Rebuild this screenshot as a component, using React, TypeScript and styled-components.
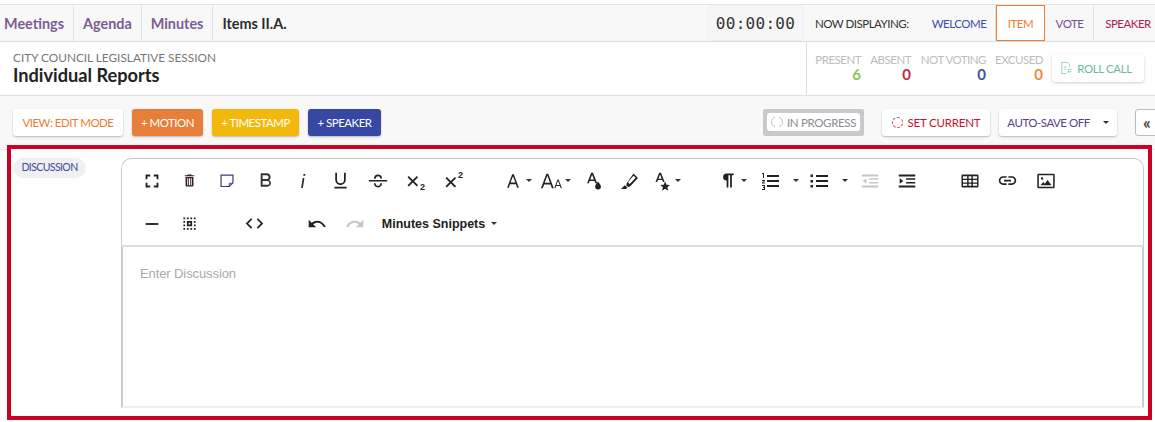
import React from 'react';
import styled, { createGlobalStyle } from 'styled-components';

const GlobalStyle = createGlobalStyle`
  html, body {
    margin: 0;
    padding: 0;
    background: #fff;
    font-family: Lato, "Open Sans", sans-serif;
  }
  * { box-sizing: border-box; }
`;

const Page = styled.div`
  width: 1155px;
  height: 422px;
  overflow: hidden;
  padding-top: 4px;
`;

/* top nav */
const Nav = styled.div`
  display: flex;
  height: 38px;
  background: #f8f8f8;
  border-top: 1px solid #e4e4e4;
  border-bottom: 1px solid #dcdcdc;
  align-items: stretch;
`;

const Crumb = styled.a<{ $current?: boolean }>`
  display: flex;
  align-items: center;
  padding: 0 9px;
  font-size: 14.4px;
  font-weight: 700;
  color: ${p => (p.$current ? '#2c2c2c' : '#7d5c93')};
  border-right: ${p => (p.$current ? 'none' : '1px solid #e2e2e2')};
  &:first-child { padding-left: 4px; }
`;

const NavRight = styled.div`
  margin-left: auto;
  display: flex;
  align-items: stretch;
`;

const Timer = styled.div`
  width: 97px;
  margin-right: 11px;
  display: flex;
  align-items: center;
  justify-content: center;
  font-family: "DejaVu Sans Mono", monospace;
  font-size: 16px;
  letter-spacing: 0.3px;
  color: #333;
  background: #f6f6f6;
  border: 1px solid #f0f0f0;
  border-radius: 5px;
`;

const NowLabel = styled.div`
  width: 107px;
  display: flex;
  align-items: center;
  font-size: 11.5px;
  letter-spacing: -0.5px;
  color: #333;
`;

const DisplayTab = styled.div<{ $color: string; $width: number; $active?: boolean }>`
  width: ${p => p.$width}px;
  flex-shrink: 0;
  display: flex;
  align-items: center;
  justify-content: center;
  font-size: 11.5px;
  letter-spacing: -0.5px;
  color: ${p => p.$color};
  border: 1px solid ${p => (p.$active ? '#ee7d31' : 'transparent')};
  border-right-color: ${p => (p.$active ? '#ee7d31' : '#e2e2e2')};
  background: ${p => (p.$active ? '#fff' : 'transparent')};
  white-space: nowrap;
  &:first-of-type { border-left-color: #e2e2e2; border-radius: 5px 0 0 0; }
  &:last-child { padding-left: 6px; border-right: none; }
`;

/* title row */
const Header = styled.div`
  display: flex;
  height: 54px;
  background: #fff;
  border-bottom: 1px solid #dedede;
`;

const TitleBlock = styled.div`
  padding: 9px 0 0 13px;
  flex: 1;
`;

const Eyebrow = styled.div`
  font-size: 11.8px;
  line-height: 14px;
  color: #777;
`;

const Title = styled.div`
  font-size: 18.2px;
  line-height: 20px;
  font-weight: 700;
  color: #222;
`;

const StatsPanel = styled.div`
  width: 349px;
  border-left: 1px solid #dedede;
  display: flex;
  padding: 11px 11px 0 8px;
`;

const Stat = styled.div<{ $width: number; $color: string }>`
  width: ${p => p.$width}px;
  margin-right: 9px;
  text-align: right;
  font-size: 11.5px;
  letter-spacing: -0.5px;
  line-height: 14px;
  color: #bdbdbd;
  white-space: nowrap;
  b {
    display: block;
    font-size: 15px;
    line-height: 15px;
    letter-spacing: 0;
    color: ${p => p.$color};
  }
`;

const RollCall = styled.div`
  width: 92px;
  height: 28px;
  margin-top: 1px;
  padding-right: 4px;
  display: flex;
  align-items: center;
  justify-content: center;
  gap: 4px;
  font-size: 11.5px;
  letter-spacing: -0.4px;
  color: #6fb7a0;
  background: #fff;
  border-radius: 4px;
  box-shadow: 0 1px 3px rgba(0, 0, 0, 0.2);
`;

/* action bar */
const ActionBar = styled.div`
  display: flex;
  height: 49px;
  padding: 13px 0 0 13px;
  background: #f8f8f8;
`;

const ActionBtn = styled.div<{ $bg: string; $color: string; $width: number; $spacing?: number }>`
  width: ${p => p.$width}px;
  flex-shrink: 0;
  height: 27px;
  margin-right: 9px;
  display: flex;
  align-items: center;
  justify-content: center;
  font-size: 11.5px;
  letter-spacing: ${p => p.$spacing ?? -0.5}px;
  white-space: nowrap;
  color: ${p => p.$color};
  background: ${p => p.$bg};
  border-radius: 3px;
  box-shadow: 0 1px 2px rgba(0, 0, 0, 0.25);
`;

const Spacer = styled.div`
  flex: 1;
`;

const ProgressFrame = styled.div`
  width: 101px;
  height: 27px;
  flex-shrink: 0;
  margin-right: 18px;
  padding: 4px;
  background: #c9c9c9;
  border-radius: 2px;
`;

const ProgressInner = styled.div`
  height: 18px;
  display: flex;
  align-items: center;
  gap: 4px;
  padding-left: 4px;
  font-size: 11.5px;
  letter-spacing: -0.35px;
  white-space: nowrap;
  color: #8a8a95;
  background: #fff;
  border-radius: 3px;
`;

const Caret = styled.span<{ $offset?: number }>`
  display: inline-block;
  width: 0;
  height: 0;
  margin-left: ${p => p.$offset ?? 0}px;
  border-left: 3px solid transparent;
  border-right: 3px solid transparent;
  border-top: 3px solid #333;
`;

const CollapseBtn = styled.div`
  width: 30px;
  height: 27px;
  flex-shrink: 0;
  margin-left: 9px;
  margin-right: -10px;
  padding-left: 7px;
  display: flex;
  align-items: center;
  font-size: 17px;
  font-weight: 700;
  color: #444;
  background: #fff;
  border: 1px solid #bbb;
  border-radius: 3px;
`;

/* red highlighted region */
const Content = styled.div`
  padding: 0 3px 0 7px;
  background: linear-gradient(#f8f8f8 4px, #e6e6e6 4px, #e6e6e6 5px, #fff 5px);
`;

const Highlight = styled.div`
  height: 275px;
  border: 4px solid #cc0023;
  background: #fff;
  display: flex;
  padding: 9px 4px 8px 2px;
`;

const Label = styled.div`
  width: 73px;
  height: 20px;
  display: flex;
  align-items: center;
  justify-content: center;
  font-size: 10.5px;
  letter-spacing: -0.6px;
  padding-bottom: 2px;
  color: #3d4aa5;
  background: #f0f0f2;
  border-radius: 10px;
`;

const Editor = styled.div`
  margin-left: 35px;
  flex: 1;
  display: flex;
  flex-direction: column;
`;

const EditorToolbar = styled.div`
  height: 89px;
  padding: 0 0 0 11px;
  border: 1px solid #ccc;
  border-bottom: 2px solid #ddd;
  border-radius: 10px 10px 0 0;
  background: #fff;
`;

const ToolRow = styled.div`
  display: flex;
  align-items: center;
  height: 43px;
`;

const ToolBtn = styled.div<{ $width?: number; $gap?: number }>`
  width: ${p => p.$width ?? 37.75}px;
  margin-left: ${p => p.$gap ?? 0}px;
  height: 38px;
  flex-shrink: 0;
  display: flex;
  align-items: center;
  justify-content: center;
  gap: 3px;
  svg { display: block; }
`;

const SnippetBtn = styled.div`
  margin-left: 8px;
  display: flex;
  align-items: center;
  gap: 6px;
  font-family: "Liberation Sans", Arial, sans-serif;
  font-size: 12.5px;
  font-weight: 700;
  color: #222;
`;

const EditorBody = styled.div`
  flex: 1;
  padding: 18px 17px;
  border-left: 2px solid #ccc;
  border-right: 2px solid #ccc;
  border-bottom: 2px solid #efefef;
  font-family: "Liberation Sans", Arial, sans-serif;
  font-size: 13px;
  letter-spacing: -0.1px;
  line-height: 17px;
  color: #a9a9a9;
`;

const Icon = ({ d, size = 24, color = '#222' }: { d: string; size?: number; color?: string }) => (
  <svg width={size} height={size} viewBox="0 0 24 24" fill={color}>
    <path d={d} />
  </svg>
);

const paths = {
  fullscreen: 'M7 10H5V5h5v2H7v3zm0 4H5v5h5v-2H7v-3zm12 5h-5v-2h3v-3h2v5zm0-9h-2V7h-3V5h5v5z',
  trash: 'M9 4.5V3.6h6v.9h3.6v1.6H5.4V4.5H9zM6.4 7.2h11.2V19a1.6 1.6 0 0 1-1.6 1.6H8A1.6 1.6 0 0 1 6.4 19V7.2zm2.4 1.6v10h1.4v-10H8.8zm2.5 0v10h1.4v-10h-1.4zm2.5 0v10h1.4v-10h-1.4z',
  bold: 'M15.6 11.8c1-.7 1.7-1.8 1.7-3.3 0-2.3-1.8-4-4-4H7v14h7c2.1 0 3.7-1.7 3.7-3.8 0-1.5-.9-2.8-2.1-2.9zM9 6.5h4.2a2 2 0 0 1 0 4H9v-4zm5 10H9v-4h5a2 2 0 0 1 0 4z',
  italic: 'M12.5 3.5h2.2v2.2h-2.2V3.5zM11.7 8.5h2L11.8 20.5h-2L11.7 8.5z',
  underline: 'M12 17c3.3 0 6-2.7 6-6V3h-2v8a4 4 0 0 1-8 0V3H6v8c0 3.3 2.7 6 6 6zm-7 2v2h14v-2H5z',
  strike: 'M2 11h20v1.6H2V11zM7.6 9.5C7.6 6.6 9.4 5 12 5s4.4 1.6 4.4 4.2h-1.9C14.4 7.6 13.4 6.7 12 6.7S9.5 7.6 9.5 9.5H7.6zM7.6 14.5h1.9c0 1.9 1 2.8 2.5 2.8s2.5-.9 2.5-2.8h1.9c0 2.9-1.8 4.5-4.4 4.5s-4.4-1.6-4.4-4.5z',
  cross: 'M5 7.2 6.3 6l4 4 4-4 1.3 1.2-4 4 4 4-1.3 1.3-4-4-4 4L5 15.2l4-4-4-4z',
  textA: 'M11 4h2l6 16h-2l-1.5-4.2h-7L7 20H5l6-16zm-1.9 9.9h5.8L12 6.2 9.1 13.9z',
  pilcrow: 'M10 4h9v2h-2v14h-2V6h-2v14h-2v-8a4 4 0 0 1 0-8z',
  olLines: 'M9 6h12v2H9V6zm0 5h12v2H9v-2zm0 5h12v2H9v-2zM4 4h2v5H5V5H4V4zm0 7h3v1l-2 1.5h2v1H4v-1l2-1.5H4v-1zm0 5h3v5H4v-1h2v-1H5v-1h1v-1H4v-1z',
  ulLines: 'M9 6h12v2H9V6zm0 5h12v2H9v-2zm0 5h12v2H9v-2zM3.5 5.5H6V8H3.5V5.5zm0 5.5H6v2.5H3.5V11zm0 5H6v2.5H3.5V16z',
  outdent: 'M3 5h18v2H3V5zm8 4h10v1.6H11V9zm0 4h10v1.6H11V13zM3 17h18v2H3v-2zm5-8v6l-4-3 4-3z',
  indent: 'M3 5h18v2H3V5zm8 4h10v1.6H11V9zm0 4h10v1.6H11V13zM3 17h18v2H3v-2zm1-8v6l4-3-4-3z',
  table: 'M4 5h16a1.3 1.3 0 0 1 1.3 1.3v11.4A1.3 1.3 0 0 1 20 19H4a1.3 1.3 0 0 1-1.3-1.3V6.3A1.3 1.3 0 0 1 4 5zm.3 1.7v2.8h4.6V6.7H4.3zm6.2 0v2.8h3V6.7h-3zm4.6 0v2.8h4.6V6.7h-4.6zM4.3 11v2.6h4.6V11H4.3zm6.2 0v2.6h3V11h-3zm4.6 0v2.6h4.6V11h-4.6zM4.3 15.1v2.2h4.6v-2.2H4.3zm6.2 0v2.2h3v-2.2h-3zm4.6 0v2.2h4.6v-2.2h-4.6z',
  link: 'M3.9 12c0-1.7 1.4-3.1 3.1-3.1h4V7H7a5 5 0 0 0 0 10h4v-1.9H7c-1.7 0-3.1-1.4-3.1-3.1zM8 13h8v-2H8v2zm9-6h-4v1.9h4c1.7 0 3.1 1.4 3.1 3.1s-1.4 3.1-3.1 3.1h-4V17h4a5 5 0 0 0 0-10z',
  image: 'M4 4h16a1.5 1.5 0 0 1 1.5 1.5v13A1.5 1.5 0 0 1 20 20H4a1.5 1.5 0 0 1-1.5-1.5v-13A1.5 1.5 0 0 1 4 4zm.2 1.7v12.6h15.6V5.7H4.2zM7.7 8a1.3 1.3 0 1 1 0 2.6 1.3 1.3 0 0 1 0-2.6zM6 16.5l3-3.5 1.7 2 3-4.2 4.3 5.7H6z',
  dash: 'M5 11h14v2H5z',
  selectAll: 'M5 5h2v2H5V5zm4 0h2v2H9V5zm4 0h2v2h-2V5zm4 0h2v2h-2V5zM5 9h2v2H5V9zm12 0h2v2h-2V9zM5 13h2v2H5v-2zm12 0h2v2h-2v-2zM5 17h2v2H5v-2zm4 0h2v2H9v-2zm4 0h2v2h-2v-2zm4 0h2v2h-2v-2zM9 9h6v6H9V9zm2 2v2h2v-2h-2z',
  code: 'M9.4 16.6 4.8 12l4.6-4.6L8 6l-6 6 6 6 1.4-1.4zm5.2 0 4.6-4.6-4.6-4.6L16 6l6 6-6 6-1.4-1.4z',
  undo: 'M12.5 8c-2.6 0-5 1-6.9 2.6L2 7v9h9l-3.6-3.6c1.4-1.2 3.2-1.9 5.1-1.9 3.5 0 6.5 2.3 7.6 5.5l2.4-.8C21 11.9 17.1 8 12.5 8z',
  redo: 'M18.4 10.6C16.6 9 14.1 8 11.5 8c-4.6 0-8.5 3-9.9 7.2l2.4.8c1.1-3.2 4.1-5.5 7.5-5.5 2 0 3.7.7 5.1 1.9L13 16h9V7l-3.6 3.6z',
  drop: 'M10 3h2l4.5 11.5h-1.9l-.9-2.5H8.3l-.9 2.5H5.5L10 3zm-1 7.3h4L11 5.2 9 10.3zM17.5 12.5c1.6 2.2 3.2 3.9 3.2 5.6a3.2 3.2 0 0 1-6.4 0c0-1.7 1.6-3.4 3.2-5.6z',
  star: 'M10 3h2l4 10h-1.9l-.7-2H8.6l-.8 2H6L10 3zm-.8 6.5h3.6L11 5 9.2 9.5zM16.5 12.5l1.5 3.5 3.8.3-2.9 2.5 1 3.7-3.4-2-3.4 2 1-3.7-2.9-2.5 3.8-.3 1.5-3.5z',
  highlight: 'M15.5 4.5 20 9l-8 8.5-2 .5-1.8-1.8.5-2L15.5 4.5zm0 2.3-5.6 6.5 1.8 1.8 6-6.4-2.2-1.9zM3 20l3.8-3.8 2.6 2.4L8 20H3z',
};

const Sticky = () => (
  <svg width="22" height="22" viewBox="0 0 24 24" fill="none">
    <path d="M5.5 5.5h13V14l-4 4h-9z" stroke="#3c3a7a" strokeWidth="1.3" />
    <path d="M18 14.5h-3.5V18" stroke="#3c3a7a" strokeWidth="1" />
  </svg>
);

const Sub = ({ up }: { up?: boolean }) => (
  <svg width="24" height="24" viewBox="0 0 24 24">
    <path d={paths.cross} fill="#222" transform={up ? 'translate(-1.5 2)' : 'translate(-1.5 1)'} />
    <text x="16" y={up ? 9 : 21} fontSize="9" fontWeight="700" fontFamily="Liberation Sans, sans-serif" fill="#222">2</text>
  </svg>
);

const SmallCaps = () => (
  <svg width="22" height="22" viewBox="0 0 24 24">
    <path d={paths.textA} fill="#222" transform="translate(-4 0)" />
    <path d={paths.textA} fill="#222" transform="translate(12.5 8) scale(0.6)" />
  </svg>
);

const RollIcon = () => (
  <svg width="13" height="14" viewBox="0 0 14 14" fill="none" stroke="#8cc5b3" strokeWidth="0.9">
    <path d="M2 1h6l2.5 2.5V6M2 1v12h5M4 6h3M4 8.5h2" />
    <path d="M9 8.5h3.5M9 11h3.5M9 8.5v4" />
  </svg>
);

const Spinner = () => (
  <svg width="12" height="12" viewBox="0 0 12 12" fill="none" stroke="#c4c4c4" strokeWidth="1">
    <path d="M4 1.2A5 5 0 0 0 4 10.8M8 1.2A5 5 0 0 1 8 10.8" />
  </svg>
);

const Ring = styled.span`
  width: 11px;
  height: 11px;
  margin-right: 5px;
  border: 1px dashed #d9404e;
  border-radius: 50%;
`;

export default function App() {
  return (
    <Page>
      <GlobalStyle />
      <Nav>
        <Crumb>Meetings</Crumb>
        <Crumb>Agenda</Crumb>
        <Crumb>Minutes</Crumb>
        <Crumb $current>Items II.A.</Crumb>
        <NavRight>
          <Timer>00:00:00</Timer>
          <NowLabel>NOW DISPLAYING:</NowLabel>
          <DisplayTab $color="#3a4ca8" $width={74}>WELCOME</DisplayTab>
          <DisplayTab $color="#ee7d31" $width={49} $active>ITEM</DisplayTab>
          <DisplayTab $color="#6e4f96" $width={49}>VOTE</DisplayTab>
          <DisplayTab $color="#b5174f" $width={61}>SPEAKER</DisplayTab>
        </NavRight>
      </Nav>
      <Header>
        <TitleBlock>
          <Eyebrow>CITY COUNCIL LEGISLATIVE SESSION</Eyebrow>
          <Title>Individual Reports</Title>
        </TitleBlock>
        <StatsPanel>
          <Stat $width={46} $color="#8cc653">PRESENT<b>6</b></Stat>
          <Stat $width={41} $color="#c22b3a">ABSENT<b>0</b></Stat>
          <Stat $width={66} $color="#3f51a8">NOT VOTING<b>0</b></Stat>
          <Stat $width={48} $color="#ee8a45">EXCUSED<b>0</b></Stat>
          <RollCall><RollIcon />ROLL CALL</RollCall>
        </StatsPanel>
      </Header>
      <ActionBar>
        <ActionBtn $bg="#fff" $color="#ee7d31" $width={110}>VIEW: EDIT MODE</ActionBtn>
        <ActionBtn $bg="#e77e39" $color="#fff" $width={71}>+ MOTION</ActionBtn>
        <ActionBtn $bg="#f2b90c" $color="#fff" $width={87}>+ TIMESTAMP</ActionBtn>
        <ActionBtn $bg="#3647a4" $color="#fff" $width={73}>+ SPEAKER</ActionBtn>
        <Spacer />
        <ProgressFrame>
          <ProgressInner><Spinner />IN PROGRESS</ProgressInner>
        </ProgressFrame>
        <ActionBtn $bg="#fff" $color="#c4122f" $width={108} $spacing={-0.2}><Ring />SET CURRENT</ActionBtn>
        <ActionBtn $bg="#fff" $color="#5a3f86" $width={118}>
          AUTO-SAVE OFF
          <Caret $offset={13} />
        </ActionBtn>
        <CollapseBtn>«</CollapseBtn>
      </ActionBar>
      <Content>
        <Highlight>
          <Label>DISCUSSION</Label>
          <Editor>
            <EditorToolbar>
              <ToolRow>
                <ToolBtn><Icon d={paths.fullscreen} size={22} /></ToolBtn>
                <ToolBtn><Icon d={paths.trash} size={17} color="#3a1d2b" /></ToolBtn>
                <ToolBtn><Sticky /></ToolBtn>
                <ToolBtn><Icon d={paths.bold} size={23} color="#333" /></ToolBtn>
                <ToolBtn><Icon d={paths.italic} size={20} /></ToolBtn>
                <ToolBtn><Icon d={paths.underline} size={21} /></ToolBtn>
                <ToolBtn><Icon d={paths.strike} size={22} /></ToolBtn>
                <ToolBtn><Sub /></ToolBtn>
                <ToolBtn><Sub up /></ToolBtn>
                <ToolBtn $gap={25} $width={40}><Icon d={paths.textA} size={20} /><Caret /></ToolBtn>
                <ToolBtn $width={36}><SmallCaps /><Caret /></ToolBtn>
                <ToolBtn><Icon d={paths.drop} size={22} /></ToolBtn>
                <ToolBtn><Icon d={paths.highlight} size={24} /></ToolBtn>
                <ToolBtn $width={33}><Icon d={paths.star} size={22} /><Caret /></ToolBtn>
                <ToolBtn $gap={29} $width={42}><Icon d={paths.pilcrow} size={21} /><Caret /></ToolBtn>
                <ToolBtn $width={50}><Icon d={paths.olLines} size={24} /><Caret $offset={8} /></ToolBtn>
                <ToolBtn $width={48}><Icon d={paths.ulLines} size={24} /><Caret $offset={8} /></ToolBtn>
                <ToolBtn $width={37}><Icon d={paths.outdent} size={22} color="#c6c6c6" /></ToolBtn>
                <ToolBtn $width={37}><Icon d={paths.indent} size={22} /></ToolBtn>
                <ToolBtn $gap={26}><Icon d={paths.table} size={22} /></ToolBtn>
                <ToolBtn><Icon d={paths.link} size={21} /></ToolBtn>
                <ToolBtn><Icon d={paths.image} size={22} /></ToolBtn>
              </ToolRow>
              <ToolRow>
                <ToolBtn><Icon d={paths.dash} size={22} /></ToolBtn>
                <ToolBtn><Icon d={paths.selectAll} size={21} /></ToolBtn>
                <ToolBtn $gap={27}><Icon d={paths.code} size={21} /></ToolBtn>
                <ToolBtn $gap={25}><Icon d={paths.undo} size={20} /></ToolBtn>
                <ToolBtn><Icon d={paths.redo} size={20} color="#c6c6c6" /></ToolBtn>
                <SnippetBtn>Minutes Snippets<Caret /></SnippetBtn>
              </ToolRow>
            </EditorToolbar>
            <EditorBody>Enter Discussion</EditorBody>
          </Editor>
        </Highlight>
      </Content>
    </Page>
  );
}
